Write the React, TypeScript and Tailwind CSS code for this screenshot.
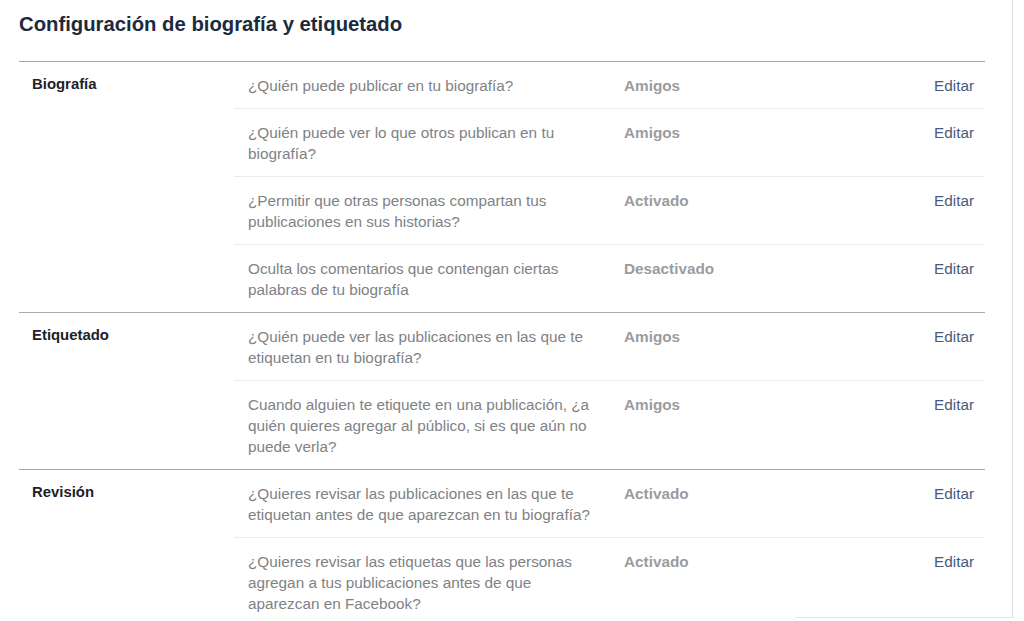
import React from 'react';

type Row = { q: string; v: string };
type Section = { label: string; rows: Row[] };

const sections: Section[] = [
  {
    label: 'Biografía',
    rows: [
      { q: '¿Quién puede publicar en tu biografía?', v: 'Amigos' },
      { q: '¿Quién puede ver lo que otros publican en tu biografía?', v: 'Amigos' },
      { q: '¿Permitir que otras personas compartan tus publicaciones en sus historias?', v: 'Activado' },
      { q: 'Oculta los comentarios que contengan ciertas palabras de tu biografía', v: 'Desactivado' },
    ],
  },
  {
    label: 'Etiquetado',
    rows: [
      { q: '¿Quién puede ver las publicaciones en las que te etiquetan en tu biografía?', v: 'Amigos' },
      {
        q: 'Cuando alguien te etiquete en una publicación, ¿a quién quieres agregar al público, si es que aún no puede verla?',
        v: 'Amigos',
      },
    ],
  },
  {
    label: 'Revisión',
    rows: [
      { q: '¿Quieres revisar las publicaciones en las que te etiquetan antes de que aparezcan en tu biografía?', v: 'Activado' },
      {
        q: '¿Quieres revisar las etiquetas que las personas agregan a tus publicaciones antes de que aparezcan en Facebook?',
        v: 'Activado',
      },
    ],
  },
];

export default function App() {
  return (
    <div className="relative w-[1024px] h-[621px] overflow-hidden bg-white font-['Liberation_Sans',Arial,sans-serif]">
      <div className="w-[1013px] h-[617px] border-r border-[#dadde1] pl-[19px] pr-[27px]">
        <h1 className="pt-[12px] pb-[25px] text-[20.3px] leading-[24px] font-bold text-[#1c2a3d]">
          Configuración de biografía y etiquetado
        </h1>
        <div className="border-t-[1.5px] border-[#a2a4a7]">
          {sections.map((s, si) => (
            <div key={s.label} className={`flex ${si > 0 ? 'border-t-[1.5px] border-[#a9abae]' : ''}`}>
              <div className="w-[215px] shrink-0 pl-[13px] pt-[12px] text-[14.9px] leading-[21px] font-bold text-[#1d2129]">
                {s.label}
              </div>
              <div className="flex-1">
                {s.rows.map((r, ri) => (
                  <div
                    key={ri}
                    className={`flex py-[12.5px] pl-[14px] pr-[11px] text-[15.3px] leading-[21px] ${ri > 0 ? 'border-t border-[#e9ebee]' : ''}`}
                  >
                    <div className="w-[356px] shrink-0 text-[#808285]">{r.q}</div>
                    <div className="ml-[20px] flex-1 font-bold text-[#9a9ca0]">{r.v}</div>
                    <div className="text-[#485a7d]">Editar</div>
                  </div>
                ))}
              </div>
            </div>
          ))}
        </div>
      </div>
      <div className="absolute left-[795px] top-[617px] w-[219px] h-px bg-[#e4e6e9]" />
    </div>
  );
}
